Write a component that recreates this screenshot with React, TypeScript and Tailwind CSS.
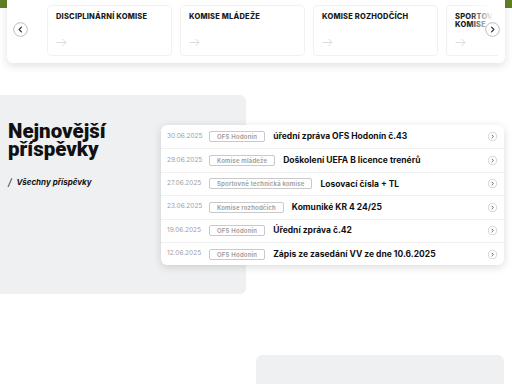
import React from 'react';

const komise = ['Disciplinární komise', 'Komise mládeže', 'Komise rozhodčích', 'Sportovně technická komise'];

const posts = [
    { date: '30.06.2025', tag: 'OFS Hodonín', title: 'úřední zpráva OFS Hodonín č.43' },
    { date: '29.06.2025', tag: 'Komise mládeže', title: 'Doškolení UEFA B licence trenérů' },
    { date: '27.06.2025', tag: 'Sportovně technická komise', title: 'Losovací čísla + TL' },
    { date: '23.06.2025', tag: 'Komise rozhodčích', title: 'Komuniké KR 4 24/25' },
    { date: '19.06.2025', tag: 'OFS Hodonín', title: 'Úřední zpráva č.42' },
    { date: '12.06.2025', tag: 'OFS Hodonín', title: 'Zápis ze zasedání VV ze dne 10.6.2025' },
];

const Chevron = ({ dir, size }: { dir: 'left' | 'right'; size: number }) => (
    <svg width={size} height={size} viewBox="0 0 16 16" fill="none">
        <circle cx="8" cy="8" r="7.3" stroke="#b8b8b8" strokeWidth="1" fill="#fff" />
        <path
            d={dir === 'left' ? 'M9 5.5L6.5 8L9 10.5' : 'M7 5.5L9.5 8L7 10.5'}
            stroke="#333"
            strokeWidth="1.3"
            strokeLinecap="round"
            strokeLinejoin="round"
        />
    </svg>
);

const Arrow = () => (
    <svg width="11" height="9" viewBox="0 0 11 9" fill="none">
        <path d="M0.5 4.5H10M6.5 1L10 4.5L6.5 8" stroke="#dcdcdc" strokeWidth="1" />
    </svg>
);

const App: React.FC = () => {
    return (
        <div
            className="w-[512px] h-[384px] overflow-hidden bg-[linear-gradient(#5f7f24_0,#5f7f24_8px,#fff_8px)]"
            style={{ fontFamily: 'Inter, "Noto Sans", sans-serif' }}
        >
            {/* komise carousel */}
            <div className="relative mx-[7px] h-[63px] bg-white rounded-b-md shadow-[0_3px_8px_rgba(0,0,0,0.12)]">
                <div className="absolute left-[6px] top-[22px]">
                    <Chevron dir="left" size={15} />
                </div>
                <div className="ml-[40px] mr-[7px] h-full overflow-hidden flex gap-[8px] pt-[5px]">
                    {komise.map((k) => (
                        <div
                            key={k}
                            className="shrink-0 w-[125px] h-[51px] border border-[#f1f1f1] rounded-sm px-[8px] pt-[7px] flex flex-col justify-between pb-[8px]"
                        >
                            <div className="text-[7.5px] leading-[8px] font-extrabold uppercase text-[#1a1a1a] tracking-[0.2px]">
                                {k}
                            </div>
                            <Arrow />
                        </div>
                    ))}
                </div>
                <div className="absolute right-[6px] top-[5px] w-[30px] h-[40px] bg-[linear-gradient(90deg,rgba(255,255,255,0),#fff_80%)]" />
                <div className="absolute right-[5px] top-[22px]">
                    <Chevron dir="right" size={15} />
                </div>
            </div>

            {/* latest posts */}
            <div className="flex items-start mt-[32px]">
                <div className="w-[246px] h-[199px] shrink-0 bg-[#eef0f2] rounded-r-md pl-[8px] pt-[28px]">
                    <h2
                        className="text-[20.5px] leading-[17.5px] font-black text-[#111]"
                        style={{ fontFamily: 'Roboto, "Noto Sans", sans-serif' }}
                    >
                        Nejnovější
                        <br />
                        příspěvky
                    </h2>
                    <div className="mt-[18px] flex items-center gap-[5px]">
                        <span className="text-[10px] leading-[10px] italic text-[#222]">/</span>
                        <span className="text-[8px] font-bold italic text-[#111]">Všechny příspěvky</span>
                    </div>
                </div>
                <div className="ml-[-85px] mt-[30px] w-[343px] bg-white rounded-md shadow-[0_2px_8px_rgba(0,0,0,0.15)]">
                    {posts.map((p, i) => (
                        <div
                            key={i}
                            className={`h-[23.4px] flex items-center pl-[6px] pr-[7px] ${i > 0 ? 'border-t border-[#f0f0f0]' : ''}`}
                        >
                            <span className="w-[42px] shrink-0 text-[6.5px] text-[#a0a0a0]">{p.date}</span>
                            <span className="shrink-0 h-[11px] px-[7px] flex items-center border border-[#c9c9c9] rounded-[2px] text-[6px] font-semibold text-[#9a9a9a] tracking-[0.2px]">
                                {p.tag}
                            </span>
                            <span className="ml-[8px] flex-1 text-[8.5px] font-bold text-[#111] whitespace-nowrap">{p.title}</span>
                            <Chevron dir="right" size={9} />
                        </div>
                    ))}
                </div>
            </div>

            <div className="ml-[256px] mt-[61px] w-[248px] h-[60px] bg-[#eef0f2] rounded-t-md" />
        </div>
    );
};

export default App;
